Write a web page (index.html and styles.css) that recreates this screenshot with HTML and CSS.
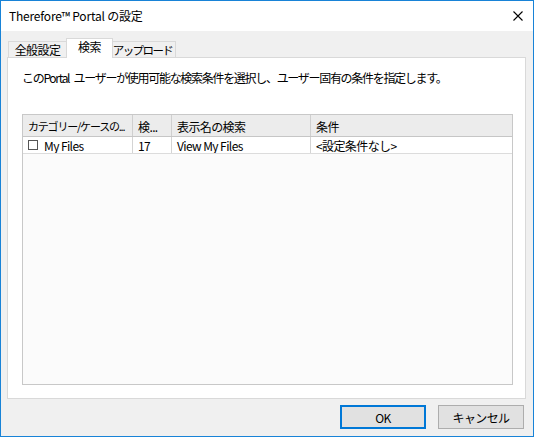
FILE: index.html
```html
<!DOCTYPE html>
<html lang="ja">
<head>
<meta charset="utf-8">
<title>Therefore™ Portal の設定</title>
<link rel="stylesheet" href="styles.css">
</head>
<body>
<div class="window">
  <div class="titlebar">
    <span class="title">Therefore™ Portal の設定</span>
    <span class="close">
      <svg width="10" height="10" viewBox="0 0 10 10"><path d="M0.5 0.5 L9.5 9.5 M9.5 0.5 L0.5 9.5" stroke="#000" stroke-width="1.1" fill="none"/></svg>
    </span>
  </div>
  <div class="body">
    <div class="tabs">
      <div class="tab tab-general">全般設定</div>
      <div class="tab tab-active">検索</div>
      <div class="tab tab-upload">アップロード</div>
    </div>
    <div class="panel">
      <p class="desc">このPortal ユーザーが使用可能な検索条件を選択し、ユーザー固有の条件を指定します。</p>
      <div class="grid">
        <div class="row head">
          <div class="cell c1 narrow">カテゴリー/ケースの...</div>
          <div class="cell c2">検...</div>
          <div class="cell c3">表示名の検索</div>
          <div class="cell c4">条件</div>
        </div>
        <div class="row item">
          <div class="cell c1"><span class="check"></span>My Files</div>
          <div class="cell c2">17</div>
          <div class="cell c3">View My Files</div>
          <div class="cell c4">&lt;設定条件なし&gt;</div>
        </div>
        <div class="rest"></div>
      </div>
    </div>
    <div class="footer">
      <button class="btn btn-ok">OK</button>
      <button class="btn">キャンセル</button>
    </div>
  </div>
</div>
</body>
</html>
```

FILE: styles.css
```css
html, body {
  margin: 0;
  padding: 0;
  background: #ffffff;
}
body {
  font-family: "Noto Sans CJK JP", "Noto Sans", sans-serif;
  font-size: 12px;
  color: #000;
}
.window {
  width: 534px;
  height: 437px;
  box-sizing: border-box;
  border: 1px solid #1883d7;
  display: flex;
  flex-direction: column;
  background: #f0f0f0;
}
.titlebar {
  height: 30px;
  background: #ffffff;
  display: flex;
  align-items: center;
  justify-content: space-between;
  padding: 0 10px 0 8px;
  flex: none;
}
.title {
  font-size: 12px;
  letter-spacing: -0.2px;
  line-height: 16px;
  margin-top: -1px;
}
.close {
  display: flex;
  width: 10px;
  height: 10px;
  margin-top: -1px;
}
.body {
  flex: 1;
  display: flex;
  flex-direction: column;
  padding: 7px 7px 0 6px;
}
.tabs {
  display: flex;
  align-items: flex-end;
  height: 19px;
  padding-left: 1px;
  flex: none;
}
.tab {
  box-sizing: border-box;
  height: 16px;
  border: 1px solid #d9d9d9;
  border-bottom: none;
  background: #f0f0f0;
  display: flex;
  align-items: center;
  justify-content: center;
  font-size: 12px;
  line-height: 14px;
  letter-spacing: -0.6px;
  white-space: nowrap;
  overflow: hidden;
}
.tab-general {
  width: 59px;
}
.tab-active {
  width: 47px;
  height: 20px;
  margin: 0 -1px -1px -1px;
  background: #ffffff;
  position: relative;
  z-index: 1;
  padding-bottom: 3px;
}
.tab-upload {
  width: 64px;
  border-left: none;
  font-size: 11.5px;
  letter-spacing: -1.6px;
  padding-right: 2px;
}
.panel {
  box-sizing: border-box;
  height: 342px;
  background: #ffffff;
  border: 1px solid #d9d9d9;
  display: flex;
  flex-direction: column;
  padding: 12px 12px 13px 14px;
  flex: none;
}
.desc {
  margin: 0;
  line-height: 16px;
  font-size: 12px;
  letter-spacing: -1.3px;
  word-spacing: 3px;
  white-space: nowrap;
}
.grid {
  margin-top: 28px;
  flex: 1;
  border: 1px solid #c8c8c8;
  background: #fbfbfb;
  display: flex;
  flex-direction: column;
}
.row {
  display: flex;
  flex: none;
}
.head {
  height: 21px;
  background: #ececec;
  border-bottom: 1px solid #c6c6c6;
}
.item {
  height: 16px;
  background: #ffffff;
  border-bottom: 1px solid #dcdcdc;
}
.cell {
  box-sizing: border-box;
  display: flex;
  align-items: center;
  padding-left: 5px;
  white-space: nowrap;
  overflow: hidden;
  border-right: 1px solid #d4d4d4;
  letter-spacing: -0.6px;
}
.head .cell {
  border-right-color: #cfcfcf;
  padding-top: 1px;
}
.head .narrow {
  font-size: 11px;
  letter-spacing: -1.2px;
}
.c1 { width: 110px; }
.c2 { width: 39px; }
.c3 { width: 139px; }
.c4 { flex: 1; border-right: none; }
.check {
  display: inline-block;
  width: 10px;
  height: 10px;
  box-sizing: border-box;
  border: 1px solid #555;
  background: #fff;
  margin-right: 6px;
}
.rest {
  flex: 1;
}
.footer {
  flex: 1;
  display: flex;
  justify-content: flex-end;
  align-items: flex-start;
  padding-top: 6px;
  padding-right: 2px;
  gap: 12px;
}
.btn {
  box-sizing: border-box;
  width: 86px;
  height: 24px;
  background: #e1e1e1;
  border: 1px solid #adadad;
  font-family: "Noto Sans CJK JP", "Noto Sans", sans-serif;
  font-size: 12px;
  color: #000;
  padding: 0;
  letter-spacing: -0.6px;
}
.btn-ok {
  border: 2px solid #0078d7;
}
```
